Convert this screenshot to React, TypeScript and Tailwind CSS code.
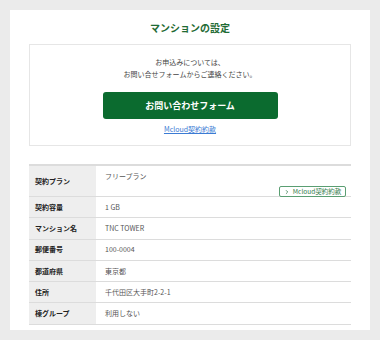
import { ChevronRight } from "lucide-react";

/* ── Contract rows ─────────────────────────────────────── */
const rows = [
  { label: "契約容量", value: "1 GB" },
  { label: "マンション名", value: "TNC TOWER" },
  { label: "郵便番号", value: "100-0004" },
  { label: "都道府県", value: "東京都" },
  { label: "住所", value: "千代田区大手町2-2-1" },
  { label: "棟グループ", value: "利用しない" },
];

const font = { fontFamily: "'Noto Sans CJK JP', 'Noto Sans', sans-serif" };

export default function App() {
  return (
    <div className="w-[380px] h-[340px] bg-[#ebebeb] p-[10px] overflow-hidden" style={font}>
      <div className="bg-white h-[320px] px-[19px] pt-[10px]">

        {/* Title */}
        <h1 className="text-center text-[10px] leading-[16px] font-bold text-[#1f6b35]">
          マンションの設定
        </h1>

        {/* Contact box */}
        <div className="mt-[8px] border border-[#e6e6e6] pt-[11px] pb-[11px] flex flex-col items-center">
          <p className="text-center text-[7px] leading-[12px] text-[#444]">
            お申込みについては、
            <br />
            お問い合せフォームからご連絡ください。
          </p>
          <a
            href="#"
            className="mt-[12px] w-[175px] h-[27px] rounded-[3px] bg-[#0b6b2f] text-white text-[9px] font-bold flex items-center justify-center"
          >
            お問い合わせフォーム
          </a>
          <a href="#" className="mt-[5px] text-[7px] leading-[10px] text-[#3b7bd4] underline">
            Mcloud契約約款
          </a>
        </div>

        {/* Table */}
        <div className="mt-[18px] border-t-2 border-[#dcdcdc] text-[7px] text-[#555]">
          <div className="flex border-b border-[#dcdcdc] h-[31px]">
            <div className="w-[67px] shrink-0 bg-[#eeeeee] pl-[6px] flex items-center font-bold text-[#222]">
              契約プラン
            </div>
            <div className="flex-1 pl-[9px] pr-[5px] pt-[5px] flex flex-col">
              <span className="leading-[10px]">フリープラン</span>
              <div className="flex justify-end mt-[5px]">
                <a
                  href="#"
                  className="h-[11px] w-[67px] border border-[#5a9e72] rounded-[2px] text-[6.5px] text-[#2f7a48] flex items-center justify-center gap-[3px]"
                >
                  <ChevronRight size={6} strokeWidth={3} />
                  Mcloud契約約款
                </a>
              </div>
            </div>
          </div>
          {rows.map((r) => (
            <div key={r.label} className="flex border-b border-[#dcdcdc] h-[21.3px]">
              <div className="w-[67px] shrink-0 bg-[#eeeeee] pl-[6px] flex items-center font-bold text-[#222]">
                {r.label}
              </div>
              <div className="flex-1 pl-[9px] flex items-center">{r.value}</div>
            </div>
          ))}
        </div>
      </div>
    </div>
  );
}
